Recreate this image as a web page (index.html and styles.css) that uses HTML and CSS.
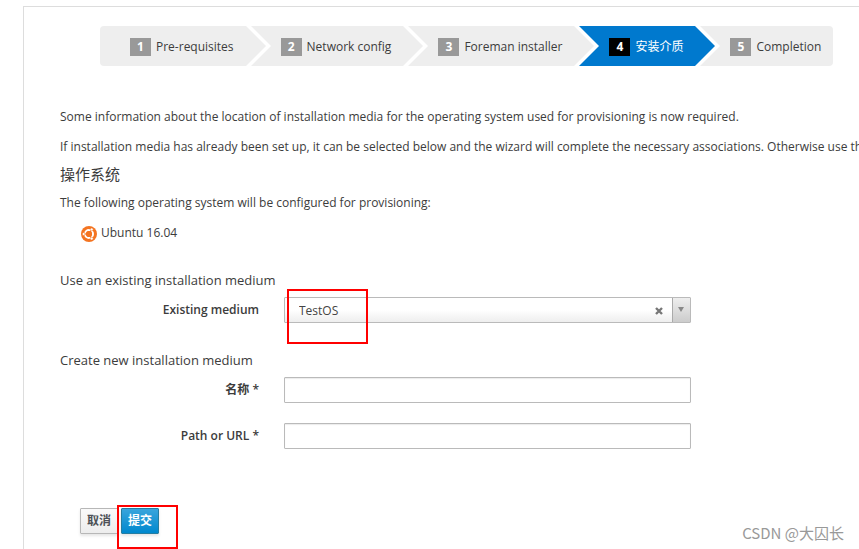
FILE: index.html
```html
<!DOCTYPE html>
<html lang="zh-CN">
<head>
    <meta charset="UTF-8">
    <title>Foreman - Provisioning Setup</title>
    <link rel="stylesheet" href="styles.css">
</head>
<body>
    <main class="panel">
        <ol class="wizard">
            <li class="step"><span class="num">1</span>Pre-requisites</li>
            <li class="step"><span class="num">2</span>Network config</li>
            <li class="step"><span class="num">3</span>Foreman installer</li>
            <li class="step active"><span class="num">4</span>安装介质</li>
            <li class="step"><span class="num">5</span>Completion</li>
        </ol>

        <p>Some information about the location of installation media for the operating system used for provisioning is now required.</p>
        <p>If installation media has already been set up, it can be selected below and the wizard will complete the necessary associations. Otherwise use the</p>
        <h4>操作系统</h4>
        <p>The following operating system will be configured for provisioning:</p>
        <div class="os">
            <svg width="16" height="16" viewBox="0 0 16 16">
                <circle cx="8" cy="8" r="8" fill="#f47421"/>
                <circle cx="8" cy="8" r="4" fill="none" stroke="#fff" stroke-width="2"/>
                <path d="M8 8L1 8M8 8L11.5 2M8 8L11.5 14" stroke="#f47421" stroke-width="1"/>
                <circle cx="8" cy="8" r="3" fill="#f47421"/>
                <g fill="#fff" stroke="#f47421" stroke-width="0.6">
                    <circle cx="2.7" cy="8" r="1.5"/>
                    <circle cx="10.7" cy="3.4" r="1.5"/>
                    <circle cx="10.7" cy="12.6" r="1.5"/>
                </g>
            </svg>
            <span>Ubuntu 16.04</span>
        </div>

        <form>
            <fieldset>
                <legend>Use an existing installation medium</legend>
                <div class="row">
                    <label for="medium">Existing medium</label>
                    <div class="select-box">
                        <select id="medium">
                            <option>TestOS</option>
                        </select>
                        <button type="button" class="clear" aria-label="Clear">
                            <svg width="8" height="8" viewBox="0 0 8 8"><path d="M1 1L7 7M7 1L1 7" stroke="#777" stroke-width="2.4"/></svg>
                        </button>
                        <span class="arrow"></span>
                    </div>
                </div>
            </fieldset>
            <fieldset>
                <legend>Create new installation medium</legend>
                <div class="row">
                    <label for="name">名称 *</label>
                    <input type="text" id="name">
                </div>
                <div class="row">
                    <label for="path">Path or URL *</label>
                    <input type="text" id="path">
                </div>
            </fieldset>
            <div class="actions">
                <button type="button" class="btn">取消</button>
                <button type="submit" class="btn primary">提交</button>
            </div>
        </form>
    </main>

    <div class="mark mark-medium"></div>
    <div class="mark mark-submit"></div>
    <div class="watermark">CSDN @大囚长</div>
</body>
</html>
```

FILE: styles.css
```css
* {
    box-sizing: border-box;
}
body {
    margin: 0;
    padding: 6px 0 0 23px;
    height: 100vh;
    overflow: hidden;
    background: #fff;
    color: #3c3c3c;
    font: 12px/20px "Open Sans", "Noto Sans CJK SC", sans-serif;
}
.panel {
    min-height: 100vh;
    padding: 19px 0 0 36px;
    border: 1px solid #ddd;
    border-right: none;
    white-space: nowrap;
}
p {
    margin: 0 0 10px;
}
h4 {
    margin: 0 0 12px;
    font-size: 15px;
    font-weight: 400;
    line-height: 14px;
}

/* wizard steps */
.wizard {
    display: flex;
    gap: 5px;
    margin: 0 0 41px 40px;
    padding: 0;
    list-style: none;
}
.step {
    position: relative;
    display: flex;
    align-items: center;
    gap: 5px;
    height: 40px;
    padding: 1px 12px 0 30px;
    background: #eee;
}
.step:first-child {
    border-radius: 4px 0 0 4px;
}
.step:last-child {
    border-radius: 0 4px 4px 0;
}
.step:not(:last-child)::before,
.step:not(:last-child)::after {
    content: "";
    position: absolute;
    z-index: 1;
    top: 0;
    left: 100%;
    border: 20px solid transparent;
    border-left-color: #eee;
    border-right: none;
}
.step:not(:last-child)::before {
    margin-left: 5px;
    border-left-color: #fff;
}
.step.active {
    background: #0079ce;
    color: #fff;
}
.step.active::after {
    border-left-color: #0079ce !important;
}
.num {
    width: 21px;
    background: #999;
    color: #fff;
    font-weight: 700;
    line-height: 18px;
    text-align: center;
}
.active .num {
    background: #000;
}

.os {
    display: flex;
    align-items: center;
    gap: 4px;
    margin: 0 0 27px 21px;
}
.os svg {
    margin-top: 2px;
}

/* form */
form {
    max-width: 631px;
}
fieldset {
    margin: 0 0 27px;
    padding: 0;
    border: none;
}
legend {
    margin-bottom: 7px;
    padding: 0;
    font-size: 13px;
    line-height: 20px;
}
.row {
    display: grid;
    grid-template-columns: 199px 1fr;
    gap: 25px;
}
.row + .row {
    margin-top: 20px;
}
.row label {
    padding-top: 3px;
    font-weight: 600;
    text-align: right;
}
input,
select {
    width: 100%;
    height: 26px;
    border: 1px solid #bababa;
    border-radius: 1px;
    background: #fff;
    color: #333;
    font: inherit;
}
input {
    padding: 2px 6px;
    box-shadow: inset 0 1px 1px rgba(0, 0, 0, 0.08);
}
.select-box {
    position: relative;
}
select {
    display: block;
    appearance: none;
    padding: 2px 50px 0 14px;
    background: linear-gradient(#fff 50%, #eee);
    color: #444;
}
.clear {
    position: absolute;
    top: 9px;
    right: 28px;
    width: 8px;
    height: 10px;
    padding: 0;
    border: none;
    background: none;
    line-height: 8px;
}
.arrow {
    position: absolute;
    top: 1px;
    right: 1px;
    width: 18px;
    height: 24px;
    border-left: 1px solid #aaa;
    background: linear-gradient(#eee, #ccc);
    pointer-events: none;
}
.arrow::after {
    content: "";
    position: absolute;
    top: 9px;
    left: 5px;
    border: 3px solid transparent;
    border-top: 5px solid #888;
    border-bottom: none;
}

.actions {
    display: flex;
    gap: 3px;
    padding: 32px 0 0 20px;
}
.btn {
    height: 26px;
    padding: 0 6px;
    border: 1px solid #b7b7b7;
    border-radius: 1px;
    background: linear-gradient(#fafafa, #ededed);
    box-shadow: 0 2px 3px rgba(0, 0, 0, 0.1);
    color: #4d5258;
    font: inherit;
    font-weight: 600;
}
.btn.primary {
    border-color: #267da1;
    background: linear-gradient(#39a5dc, #0088ce);
    color: #fff;
}

/* annotations */
.mark {
    position: absolute;
    border: 2px solid #f00;
}
.mark-medium {
    top: 289px;
    left: 287px;
    width: 81px;
    height: 55px;
}
.mark-submit {
    top: 505px;
    left: 117px;
    width: 61px;
    height: 44px;
}
.watermark {
    position: absolute;
    right: 15px;
    bottom: 6px;
    color: #999;
    font: 15px/20px "Noto Sans CJK SC", sans-serif;
}
```
